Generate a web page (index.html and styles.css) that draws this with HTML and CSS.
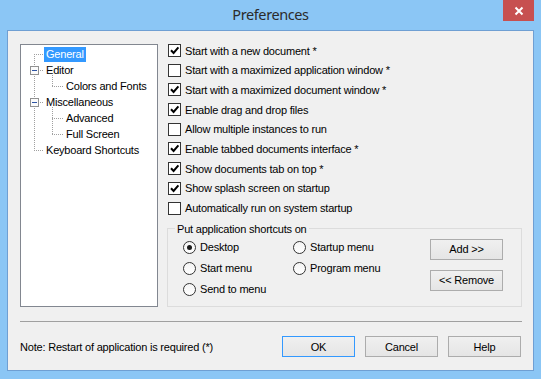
FILE: index.html
```html
<!DOCTYPE html>
<html lang="en">
<head>
  <meta charset="UTF-8">
  <title>Preferences</title>
  <link rel="stylesheet" href="styles.css">
</head>
<body>
  <div class="window">
    <div class="titlebar">
      <span></span>
      <div class="title">Preferences</div>
      <div class="close">
        <svg width="10" height="10" viewBox="0 0 10 10"><path d="M1.5 1.5 L8.5 8.5 M8.5 1.5 L1.5 8.5" stroke="#fff" stroke-width="2"/></svg>
      </div>
    </div>

    <div class="client">
      <div class="main">
        <div class="tree">
          <svg class="tree-lines" width="136" height="120">
            <g stroke="#a0a0a0" stroke-dasharray="1 1" shape-rendering="crispEdges">
              <path d="M13.5 9 V106"/>
              <path d="M13 9.5 H23 M13 25.5 H23 M13 57.5 H23 M13 105.5 H23"/>
              <path d="M31.5 30 V42 M31.5 62 V90"/>
              <path d="M31 41.5 H42 M31 73.5 H42 M31 89.5 H42"/>
            </g>
            <g shape-rendering="crispEdges">
              <rect x="9.5" y="21.5" width="8" height="8" fill="#fbfbfb" stroke="#919191"/>
              <rect x="9.5" y="53.5" width="8" height="8" fill="#fbfbfb" stroke="#919191"/>
              <path d="M11 25.5 H16 M11 57.5 H16" stroke="#2f55a4"/>
            </g>
          </svg>
          <div class="node"><span class="label selected">General</span></div>
          <div class="node"><span class="label">Editor</span></div>
          <div class="node child"><span class="label">Colors and Fonts</span></div>
          <div class="node"><span class="label">Miscellaneous</span></div>
          <div class="node child"><span class="label">Advanced</span></div>
          <div class="node child"><span class="label">Full Screen</span></div>
          <div class="node"><span class="label">Keyboard Shortcuts</span></div>
        </div>

        <div class="options">
          <div class="checks">
            <div class="check"><span class="box on"></span>Start with a new document *</div>
            <div class="check"><span class="box"></span>Start with a maximized application window *</div>
            <div class="check"><span class="box on"></span>Start with a maximized document window *</div>
            <div class="check"><span class="box on"></span>Enable drag and drop files</div>
            <div class="check"><span class="box"></span>Allow multiple instances to run</div>
            <div class="check"><span class="box on"></span>Enable tabbed documents interface *</div>
            <div class="check"><span class="box on"></span>Show documents tab on top *</div>
            <div class="check"><span class="box on"></span>Show splash screen on startup</div>
            <div class="check"><span class="box"></span>Automatically run on system startup</div>
          </div>

          <fieldset class="shortcuts">
            <legend>Put application shortcuts on</legend>
            <div class="shortcuts-body">
              <div class="radios">
                <div class="radio"><span class="dot on"></span>Desktop</div>
                <div class="radio"><span class="dot"></span>Startup menu</div>
                <div class="radio"><span class="dot"></span>Start menu</div>
                <div class="radio"><span class="dot"></span>Program menu</div>
                <div class="radio"><span class="dot"></span>Send to menu</div>
              </div>
              <div class="side-buttons">
                <button class="btn">Add &gt;&gt;</button>
                <button class="btn">&lt;&lt; Remove</button>
              </div>
            </div>
          </fieldset>
        </div>
      </div>

      <div class="separator"></div>

      <div class="footer">
        <div class="note">Note: Restart of application is required (*)</div>
        <div class="buttons">
          <button class="btn default">OK</button>
          <button class="btn">Cancel</button>
          <button class="btn">Help</button>
        </div>
      </div>
    </div>
  </div>
</body>
</html>
```

FILE: styles.css
```css
* {
  margin: 0;
  padding: 0;
  box-sizing: border-box;
}

body {
  width: 541px;
  height: 379px;
  overflow: hidden;
  background: #8bc6f5;
  font-family: 'Liberation Sans', Arial, sans-serif;
  font-size: 11px;
  letter-spacing: -0.2px;
  color: #000;
}

.window {
  display: flex;
  flex-direction: column;
  height: 379px;
}

/* title bar */
.titlebar {
  height: 30px;
  display: grid;
  grid-template-columns: 1fr auto 1fr;
}

.title {
  font-family: 'Noto Sans', sans-serif;
  font-size: 14.5px;
  letter-spacing: -0.4px;
  line-height: 29px;
  color: #2b2b2b;
}

.close {
  justify-self: end;
  width: 31px;
  height: 21px;
  margin-right: 7px;
  background: #c75050;
  display: flex;
  align-items: center;
  justify-content: center;
}

/* client area */
.client {
  flex: 1;
  margin: 0 7px 8px 7px;
  border: 1px solid #6f9fd3;
  background: #f0f0f0;
  padding: 13px 11px 0 12px;
}

.main {
  display: flex;
  gap: 9px;
  height: 263px;
}

/* tree */
.tree {
  position: relative;
  width: 138px;
  background: #fff;
  border: 1px solid #828790;
  padding-top: 1px;
}

.tree-lines {
  position: absolute;
  top: 0;
  left: 0;
}

.node {
  position: relative;
  height: 16px;
  display: flex;
  align-items: center;
  padding-left: 23px;
}

.node.child {
  padding-left: 43px;
}

.label {
  line-height: 15px;
  padding: 0 2px;
  white-space: nowrap;
}

.label.selected {
  background: #3399ff;
  color: #fff;
}

/* options */
.options {
  width: 355px;
  display: flex;
  flex-direction: column;
}

.checks {
  display: flex;
  flex-direction: column;
  gap: 6.7px;
  padding-left: 1px;
}

.check {
  height: 13px;
  display: flex;
  align-items: center;
  gap: 4px;
  white-space: nowrap;
}

.box {
  width: 13px;
  height: 13px;
  border: 1px solid #333;
  background: #fff;
  flex: none;
}

.box.on {
  background: #fff url("data:image/svg+xml,%3Csvg xmlns='http://www.w3.org/2000/svg' width='11' height='11'%3E%3Cpath d='M2 5.2 L4.6 8 L9.4 2.4' fill='none' stroke='%23000' stroke-width='2'/%3E%3C/svg%3E") no-repeat center;
}

.shortcuts {
  flex: 1;
  margin-top: 7px;
  min-width: 0;
  border: 1px solid #dcdcdc;
  padding: 1px 18px 0 15px;
}

.shortcuts legend {
  margin-left: -8px;
  padding: 0 2px;
  line-height: 14px;
}

.shortcuts-body {
  display: flex;
  justify-content: space-between;
}

.radios {
  display: grid;
  grid-template-columns: 110px auto;
  grid-auto-rows: 21px;
}

.radio {
  display: flex;
  align-items: center;
  gap: 4px;
  white-space: nowrap;
}

.dot {
  width: 13px;
  height: 13px;
  border-radius: 50%;
  border: 1px solid #333;
  background: linear-gradient(#f4f4f4, #fff);
  display: flex;
  align-items: center;
  justify-content: center;
  flex: none;
}

.dot.on::after {
  content: '';
  width: 5px;
  height: 5px;
  border-radius: 50%;
  background: #1a1a1a;
}

.side-buttons {
  display: flex;
  flex-direction: column;
  gap: 10px;
  margin-top: 2px;
}

/* buttons */
.btn {
  width: 73px;
  height: 21px;
  border: 1px solid #acacac;
  background: linear-gradient(#f0f0f0, #e5e5e5);
  font-family: inherit;
  font-size: 11px;
  letter-spacing: -0.2px;
  color: #000;
}

.btn.default {
  border-color: #3399ff;
}

.separator {
  margin-top: 14px;
  border-top: 1px solid #a0a0a0;
}

.footer {
  margin-top: 14px;
  display: flex;
  align-items: center;
  justify-content: space-between;
}

.buttons {
  display: flex;
  gap: 10px;
  padding-right: 1px;
}
```
